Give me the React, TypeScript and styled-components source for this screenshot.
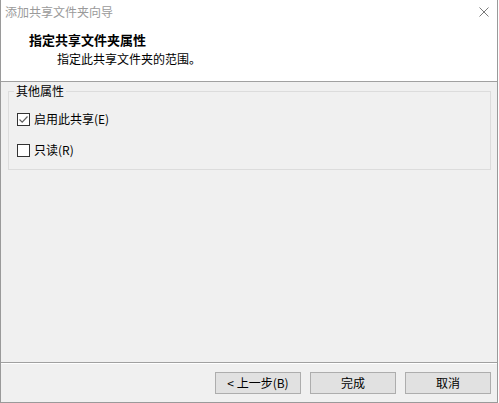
import React from "react";
import styled, { createGlobalStyle } from "styled-components";

const Global = createGlobalStyle`
  html, body { margin: 0; padding: 0; background: #ffffff; }
  * { box-sizing: border-box; }
  body { font-family: "Noto Sans CJK SC", "Noto Sans", sans-serif; font-size: 12px; color: #000; }
`;

const Window = styled.div`
  width: 498px;
  height: 403px;
  display: flex;
  flex-direction: column;
  border: 1px solid #9a9a9a;
  border-top: none;
  background: #f0f0f0;
`;

const Header = styled.div`
  height: 82px;
  background: #ffffff;
  border-bottom: 1px solid #a0a0a0;
  display: flex;
  flex-direction: column;
`;

const TitleBar = styled.div`
  height: 24px;
  display: flex;
  align-items: center;
  justify-content: space-between;
  padding: 0 8px 0 4px;
`;

const TitleText = styled.span`
  color: #9a9a9a;
  font-size: 12px;
  line-height: 16px;
`;

const CloseIcon = styled.svg`
  width: 10px;
  height: 10px;
  display: block;
`;

const Heading = styled.div`
  margin-top: 8px;
  padding-left: 28px;
  font-size: 13px;
  font-weight: bold;
  line-height: 16px;
`;

const SubHeading = styled.div`
  margin-top: 3px;
  padding-left: 56px;
  font-size: 12px;
  line-height: 16px;
`;

const Body = styled.div`
  flex: 1;
  padding: 1px 6px 0 7px;
`;

const GroupBox = styled.fieldset`
  margin: 0;
  padding: 10px 0 9px 0;
  border: 1px solid #dcdcdc;
  min-width: 0;
`;

const GroupLegend = styled.legend`
  margin-left: 5px;
  padding: 0 2px;
  font-size: 12px;
  line-height: 16px;
`;

const Rows = styled.div`
  display: flex;
  flex-direction: column;
  gap: 11px;
  padding-left: 8px;
`;

const Row = styled.label`
  height: 20px;
  display: flex;
  align-items: center;
  gap: 4px;
  font-size: 12px;
  line-height: 16px;
`;

const Box = styled.span`
  width: 13px;
  height: 13px;
  border: 1px solid #333333;
  background: #ffffff;
  display: flex;
  align-items: center;
  justify-content: center;
`;

const Footer = styled.div`
  height: 40px;
  border-top: 1px solid #a0a0a0;
  box-shadow: inset 0 1px 0 #ffffff;
  display: flex;
  justify-content: flex-end;
  align-items: flex-start;
  gap: 9px;
  padding: 9px 6px 0 0;
`;

const Button = styled.button`
  width: 86px;
  height: 22px;
  margin: 0;
  padding: 0;
  background: #e1e1e1;
  border: 1px solid #adadad;
  font-family: "Noto Sans CJK SC", "Noto Sans", sans-serif;
  font-size: 12px;
  line-height: 16px;
  color: #000;
`;

const CheckBox: React.FC<{ checked?: boolean }> = ({ checked }) => (
  <Box>
    {checked && (
      <svg width="11" height="11" viewBox="0 0 11 11">
        <path d="M1.5 5.5 L4.2 8.2 L9.5 2.5" fill="none" stroke="#5f5f5f" strokeWidth="1.2" />
      </svg>
    )}
  </Box>
);

export default function App() {
  return (
    <>
      <Global />
      <Window>
        <Header>
          <TitleBar>
            <TitleText>添加共享文件夹向导</TitleText>
            <CloseIcon viewBox="0 0 10 10">
              <path d="M0.5 0.5 L9.5 9.5 M9.5 0.5 L0.5 9.5" stroke="#7a7a7a" strokeWidth="1" />
            </CloseIcon>
          </TitleBar>
          <Heading>指定共享文件夹属性</Heading>
          <SubHeading>指定此共享文件夹的范围。</SubHeading>
        </Header>
        <Body>
          <GroupBox>
            <GroupLegend>其他属性</GroupLegend>
            <Rows>
              <Row>
                <CheckBox checked />
                启用此共享(E)
              </Row>
              <Row>
                <CheckBox />
                只读(R)
              </Row>
            </Rows>
          </GroupBox>
        </Body>
        <Footer>
          <Button>&lt; 上一步(B)</Button>
          <Button>完成</Button>
          <Button>取消</Button>
        </Footer>
      </Window>
    </>
  );
}
